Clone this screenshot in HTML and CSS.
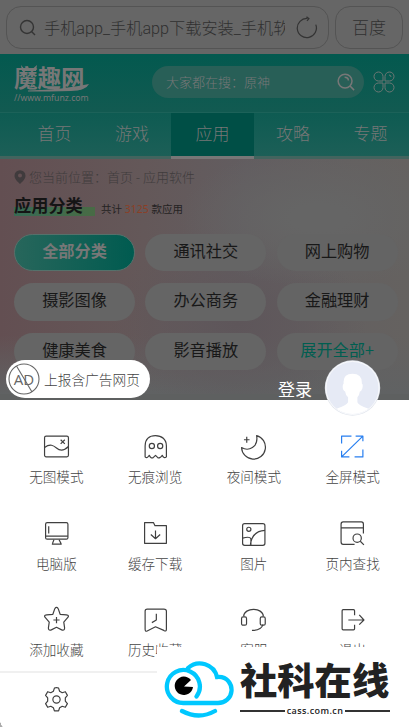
FILE: index.html
```html
<!DOCTYPE html>
<html lang="zh-CN">
<head>
<meta charset="utf-8">
<title>应用分类</title>
<link rel="stylesheet" href="styles.css">
</head>
<body>
<div class="screen">
  <section class="page">
    <div class="browser-bar">
      <div class="address">
        <svg class="address-search" viewBox="0 0 18 18"><circle cx="8" cy="8" r="6.5"/><path d="M12.5 12.5L16 16"/></svg>
        <span class="address-text">手机app_手机app下载安装_手机软件</span>
        <svg class="reload" viewBox="0 0 24 24"><path d="M21.7 9A10 10 0 1 1 13 2.6M12 .7L14.5 2.7L12.5 5"/></svg>
      </div>
      <div class="engine">百度</div>
    </div>
    <header class="site-header">
      <div class="brand">
        <span class="brand-name">魔趣网</span>
        <span class="brand-url">//www.mfunz.com</span>
        <svg class="brand-deco" viewBox="0 0 78 32"><path d="M7 0l3 3.500h9l4-3.500-1 6H8z"/><path d="M14 25.500Q50 24.500 75 19Q72 25.500 57 26Q35 26.500 14 26.500z"/></svg>
      </div>
      <div class="search"><span>大家都在搜：原神</span>
        <svg viewBox="0 0 20 20"><circle cx="8.5" cy="8.5" r="7.3"/><path d="M13.5 13.5L18 18M8 4.5Q12 4.5 12 8"/></svg>
      </div>
      <svg class="apps" viewBox="0 0 22 22"><path d="M10 10H5.5A4.5 4.5 0 1 1 10 5.5zM12 10V5.5A4.5 4.5 0 1 1 16.500 10zM10 12V16.500A4.500 4.500 0 1 1 5.500 12zM12 12H16.500A4.500 4.500 0 1 1 12 16.500zM16 4Q18 4 18 6"/></svg>
    </header>
    <nav class="tabs"><span>首页</span><span>游戏</span><span class="active">应用</span><span>攻略</span><span>专题</span></nav>
    <main class="content">
      <div class="crumbs"><svg viewBox="0 0 12 14"><path fill-rule="evenodd" d="M6 14C4 12 .5 9 .5 5.700a5.500 5.500 0 0 1 11 0C11.500 9 8 12 6 14zM6 3.500a2 2 0 1 0 0 4 2 2 0 0 0 0-4z"/></svg><span>您当前位置：首页 - 应用软件</span></div>
      <div class="heading"><h1>应用分类</h1><p>共计 <b>3125</b> 款应用</p></div>
      <div class="categories">
        <span class="selected">全部分类</span><span>通讯社交</span><span>网上购物</span>
        <span>摄影图像</span><span>办公商务</span><span>金融理财</span>
        <span>健康美食</span><span>影音播放</span><span class="more">展开全部+</span>
      </div>
    </main>
    <div class="report">
      <svg viewBox="0 0 32 32"><circle cx="16" cy="16" r="15"/><path d="M8.500 3L24 29"/><text x="16" y="21.500">AD</text></svg>
      <span>上报含广告网页</span>
    </div>
    <div class="login"><span>登录</span>
      <svg viewBox="0 0 57 57"><defs><clipPath id="face"><circle cx="28.500" cy="28.500" r="26.500"/></clipPath></defs><circle cx="28.500" cy="28.500" r="28.200" fill="#e2e6ee"/><circle cx="28.500" cy="28.500" r="27" fill="#e6eaf5" stroke="#fff" stroke-width=".8"/><g clip-path="url(#face)"><path fill="#fff" d="M19.500 24Q18.500 14 28.500 14Q38.500 14 38 24Q39.500 25 38.500 29Q37.500 32 36 32Q35.500 36 33.500 38V43Q34.500 46 43.500 49Q49.500 51 50.500 57H6.500Q7.500 51 13.500 49Q22.500 46 24 43V38Q21.500 36 21 32Q18.500 31 18.500 27Q18.500 25 19.500 24z"/></g></svg>
    </div>
  </section>
  <section class="menu">
    <div class="menu-grid">
      <div class="item"><svg viewBox="0 0 26 26"><rect x="1.500" y="3" width="23" height="20" rx="1.500"/><path d="M1.500 14C7 10 10 12 13 14.500S20 17.500 24.500 13M17 6.500l4 4M21 6.500l-4 4"/></svg><span>无图模式</span></div>
      <div class="item"><svg viewBox="0 0 26 26"><path d="M3 23V12.500C3 6 7 2.500 13 2.500S23.500 6 23.500 12.500V23Q21 25 19.500 21.500Q17 25 15 23.500L13 21.500L11 23.500Q8.500 25 7 21.500Q5 25 3 23z"/><circle cx="9.500" cy="12.500" r="2.500"/><circle cx="17.500" cy="12.500" r="2.500"/></svg><span>无痕浏览</span></div>
      <div class="item"><svg viewBox="0 0 26 26"><path d="M16 2.500A11.500 11.500 0 1 1 1.500 14C8 18 18 14 16 2.500zM6.500 3.500V9.500M3.800 6.500H9.200"/></svg><span>夜间模式</span></div>
      <div class="item blue"><svg viewBox="0 0 26 26"><path d="M2.500 10V3H12M16 3H23V8M23 16V23H15M10 23H2.500V17M3 22.500L22.500 3.500"/></svg><span>全屏模式</span></div>
      <div class="item"><svg viewBox="0 0 26 26"><rect x="2.500" y="2.500" width="21.500" height="16" rx="1.500"/><path d="M2.500 15.500H24M5.500 6V13M10.500 19L9 23M15.500 19L17.500 23M8.500 23.200H18"/></svg><span>电脑版</span></div>
      <div class="item"><svg viewBox="0 0 26 26"><path d="M2.500 22.500V2.500H11L12.500 5.500H23.500V22.500zM13 10V18M8.500 14L13 18L17.500 14"/></svg><span>缓存下载</span></div>
      <div class="item"><svg viewBox="0 0 26 26"><rect x="2.500" y="3.500" width="21.500" height="21" rx="2"/><circle cx="8.500" cy="9" r="2"/><path d="M2.500 17.500Q9.500 15.500 10.500 18V24M10 24C11 15 16 10.500 24 10"/></svg><span>图片</span></div>
      <div class="item"><svg viewBox="0 0 26 26"><path d="M23.500 13V4Q23.500 1.800 21.500 1.800H4Q2 1.800 2 4V21Q2 23.500 4 23.500H15M2 7.500H23.500M20.500 20.500L24 24"/><circle cx="17.500" cy="17.500" r="4"/></svg><span>页内查找</span></div>
      <div class="item"><svg viewBox="0 0 26 26"><path d="M13 1.500Q14 1 14.800 3L16.500 8L22.500 8.500Q26 9 23.500 11.500L20 15.500L20.800 21Q21 24 18 23L13 20.500L8 23Q5 24 5.200 21L6 15.500L2.500 11.500Q0 9 3.500 8.500L9.500 8L11.200 3Q12 1 13 1.500zM13 10.500V16.500M10 13.500H16"/></svg><span>添加收藏</span></div>
      <div class="item"><svg viewBox="0 0 26 26"><path d="M3 22.500V5Q3 3 5 3H21Q23.500 3 23.500 5V22.500Q23.500 25 21 23.500L13 20L5 24Q3 25 3 22.500zM13.800 7.500V13.500L9.500 16"/></svg><span>历史收藏</span></div>
      <div class="item"><svg viewBox="0 0 26 26"><path d="M3.500 10C4 1 22 1 22.500 10M22 18C21 22 16 23.500 11.500 23.500"/><rect x="1.500" y="10.500" width="4.800" height="8" rx="1.500"/><rect x="19.500" y="10.500" width="4.800" height="8" rx="1.500"/></svg><span>客服</span></div>
      <div class="item"><svg viewBox="0 0 26 26"><path d="M15 9V4.500Q15 3.500 14 3.500H4Q3 3.500 3 4.500V22Q3 23 4 23H14Q15 23 15 22V18M9 13.500H24M19.500 8.500L24 13.500L19.500 18"/></svg><span>退出</span></div>
    </div>
    <div class="settings"><svg viewBox="0 0 26 26"><path d="M11 2Q13 1 15 2L16 5L18.500 6.500L21.500 5.500L23.500 9L21.500 11.500V14.500L23.500 17L21.500 20.500L18.500 19.500L16 21L15 24H11L10 21L7.500 19.500L4.500 20.500L2.500 17L4.500 14.500V11.500L2.500 9L4.500 5.500L7.500 6.500L10 5z"/><circle cx="13" cy="13" r="3.500"/></svg></div>
  </section>
  <aside class="watermark">
    <svg class="cloud" viewBox="0 0 72 60"><path d="M25 8C35 -1 51 4 54 17C65 16 69 25 68.500 31C68 38 62 43 55 43H21A16.500 16.500 0 1 1 33.500 36.500"/><path d="M19 51Q36 60 52 51"/><path class="pupil" d="M21 26.500L28 20A9.200 9.200 0 1 0 30 27z"/></svg>
    <div class="wm-text"><strong>社科在线</strong><div class="wm-domain"><i></i><span>cass.com.cn</span><i></i></div></div>
  </aside>
  <div class="corner"></div>
</div>
</body>
</html>
```
FILE: styles.css
```css
* { box-sizing: border-box; }
body { margin: 0; font-family: "Noto Sans CJK SC", sans-serif; font-weight: 300; }
svg { display: block; fill: none; flex: none; }
.screen { position: relative; width: 409px; height: 727px; overflow: hidden; background: #fff; }
.page { position: relative; height: 400px; background: #666; }

.browser-bar { height: 54px; padding: 6px 6px 5px; display: flex; gap: 6px; background: #666; color: #303030; }
.address, .engine { height: 43px; border: 1px solid #545454; border-radius: 15px; display: flex; align-items: center; }
.address { width: 323px; padding-left: 12px; }
.engine { width: 68px; justify-content: center; padding-bottom: 2px; font-size: 17px; }
.address-search { width: 18px; height: 18px; stroke: #343434; stroke-width: 1.400; }
.address-text { width: 241px; margin-left: 7px; padding-bottom: 1px; overflow: hidden; white-space: nowrap; font-family: Roboto, "Noto Sans CJK SC", sans-serif; font-size: 16.200px; }
.reload { width: 23px; height: 23px; margin-left: 10px; stroke: #343434; stroke-width: 1.300; }

.site-header { height: 58px; display: flex; align-items: center; padding: 0 13px 2px 14px; background: linear-gradient(#03594f, #125a51); color: #777; }
.brand { position: relative; width: 138px; height: 38px; display: flex; flex-direction: column; }
.brand-name { font-size: 23.500px; line-height: 28px; font-weight: 700; }
.brand-url { margin-top: 2px; font-size: 8.700px; line-height: 10px; font-family: "Noto Sans"; font-weight: 400; }
.brand-deco { position: absolute; left: 0; top: 2px; width: 78px; height: 32px; fill: #777; }
.search { width: 212px; height: 32px; border-radius: 16px; padding: 0 8px 0 14px; display: flex; align-items: center; justify-content: space-between; background: #285f57; font-size: 13px; }
.search span { padding-bottom: 1px; }
.search svg { width: 19px; height: 19px; stroke: #777; stroke-width: 1.600; }
.apps { width: 22px; height: 22px; margin-left: 9px; stroke: #6d7774; stroke-width: 1; }

.tabs { height: 47px; display: grid; grid-template-columns: 77px 78px 83px 78px 77px; padding-left: 16px; background: linear-gradient(#0e5b52, #1c5f57); border-top: 1px solid #1c6259; border-bottom: 3px solid #42645e; color: #777; font-size: 17px; line-height: 40px; text-align: center; }
.tabs span { height: 46px; }
.tabs .active { background: #004f46; border-bottom: 3px solid #777; }

.content { height: 241px; padding: 8px 11px 0 14px; background: radial-gradient(ellipse 140px 70px at 78% 25%, #656565 20%, #65656500), radial-gradient(ellipse 130px 90px at 58% 70%, #5e565a, #5e565a00), linear-gradient(#66666600 75%, #606263 100%), linear-gradient(90deg, #634f52 0, #645859 35%, #625d60 60%, #656260 100%); border-bottom: 6px solid #5e6060; }
.crumbs { height: 19px; display: flex; align-items: center; gap: 3px; color: #403c3d; font-size: 13px; }
.crumbs svg { width: 12px; height: 14px; fill: #403b3d; }
.heading { height: 34px; display: flex; align-items: center; gap: 6px; }
.heading h1 { margin: 3px 0 0; width: 81px; font-size: 17.200px; line-height: 24px; font-weight: 700; color: #151515; background: linear-gradient(90deg, #386a54, #486b45) 0 14px / 100% 9px no-repeat; }
.heading p { margin: 10px 0 0; font-size: 10.500px; color: #252323; font-weight: 400; font-family: "Noto Sans", "Noto Sans CJK SC", sans-serif; white-space: nowrap; }
.heading b { color: #8b3f26; font-weight: 400; }
.categories { margin-top: 14px; display: grid; grid-template-columns: repeat(3, 121px); gap: 12px 10.300px; }
.categories span { height: 37.300px; border-radius: 19px; background: #656565; color: #181818; font-size: 16.200px; line-height: 33px; text-align: center; font-weight: 400; }
.categories span:nth-child(3n) { background: #646464; }
.categories .selected { background: linear-gradient(90deg, #27665b, #005b50); border: 1px solid #55716b; color: #777; font-weight: 700; line-height: 31px; }
.categories .more { color: #005e50; }

.report { position: absolute; left: 6px; top: 360px; width: 144px; height: 38px; border-radius: 19px; background: #fff; padding-left: 2px; display: flex; align-items: center; gap: 4px; color: #444; font-size: 13.700px; }
.report span { padding-bottom: 1px; }
.report svg { width: 32px; height: 32px; stroke: #666; stroke-width: 1.100; }
.report text { font: 15px "Open Sans", sans-serif; fill: #666; stroke: none; text-anchor: middle; }
.login { position: absolute; z-index: 2; left: 278px; top: 360px; display: flex; align-items: center; gap: 12px; color: #fff; font-size: 17px; font-weight: 400; }
.login svg { width: 57px; height: 56px; }

.menu { height: 327px; }
.menu-grid { height: 271px; padding: 33px 7px 0; display: grid; grid-template-columns: repeat(4, 1fr); grid-auto-rows: 86.500px; }
.item { display: flex; flex-direction: column; align-items: center; color: #444; font-size: 13.600px; line-height: 20px; }
.item span { margin-top: 6px; }
.item svg, .settings svg { width: 27px; height: 27px; stroke: #404040; stroke-width: 1.150; stroke-linejoin: round; }
.item.blue svg { stroke: #287ff0; }
.settings { height: 56px; border-top: 2px solid #f0f0f0; padding: 13px 0 0 42.500px; }

.watermark { position: absolute; left: 157px; top: 647px; width: 252px; height: 80px; background: #fff; display: flex; }
.cloud { width: 72px; height: 60px; margin: 13px 5px 0 6px; stroke: #00c8ff; stroke-width: 4.300; stroke-linecap: round; }
.cloud .pupil { fill: #000; stroke: none; }
.wm-text { width: 150px; color: #222; }
.wm-text strong { display: block; margin-top: 13px; height: 42px; font-size: 37.300px; line-height: 38px; font-weight: 900; white-space: nowrap; }
.wm-domain { display: flex; align-items: center; gap: 2px; margin: 1px 0 0; font: 600 9px/16px "Open Sans", sans-serif; }
.wm-domain span { letter-spacing: .4px; }
.wm-domain i { height: 2px; flex: 1; background: #333; }
.corner { position: absolute; left: 0; bottom: 0; width: 4px; height: 9px; background: radial-gradient(ellipse at 100% 0, transparent 70%, #aaa 75%); }
```
